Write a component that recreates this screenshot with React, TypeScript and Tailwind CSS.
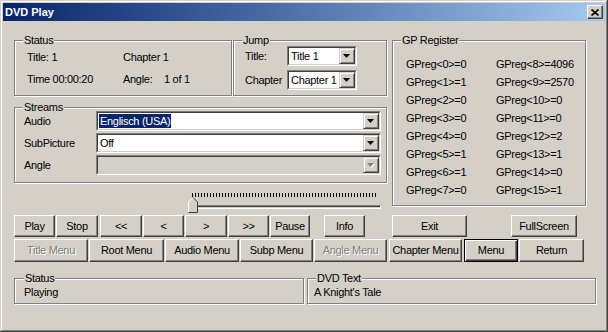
import React from "react";

const raised =
  "flex items-center justify-center border border-t-white border-l-white border-r-[#404040] border-b-[#404040] shadow-[inset_-1px_-1px_0_#808080] bg-[#d4d0c8]";
const disabledText = "text-[#808080] [text-shadow:1px_1px_0_#fff]";

type BoxProps = { label: string; className?: string; children?: React.ReactNode; labelLeft?: string };

const GroupBox = ({ label, className = "", children, labelLeft = "left-[8px]" }: BoxProps) => (
  <div className={`relative border border-[#808080] shadow-[inset_1px_1px_0_#fff,1px_1px_0_#fff] ${className}`}>
    <span className={`absolute top-[-7px] bg-[#d4d0c8] px-[1px] leading-[13px] ${labelLeft}`}>{label}</span>
    {children}
  </div>
);

const DropBtn = ({ disabled }: { disabled?: boolean }) => (
  <div className="flex w-[16px] shrink-0 items-center justify-center border border-t-[#d4d0c8] border-l-[#d4d0c8] border-r-[#404040] border-b-[#404040] bg-[#d4d0c8] shadow-[inset_1px_1px_0_#fff,inset_-1px_-1px_0_#808080]">
    <svg width="8" height="5" viewBox="0 0 8 5">
      {disabled && <polygon points="1,1 8,1 4.5,5" fill="#fff" />}
      <polygon points="0,0 7,0 3.5,4" fill={disabled ? "#808080" : "#000"} />
    </svg>
  </div>
);

type ComboProps = { text?: string; selected?: boolean; disabled?: boolean; className?: string };

const Combo = ({ text, selected, disabled, className = "" }: ComboProps) => (
  <div className={`flex h-[20px] border border-t-[#808080] border-l-[#808080] border-r-white border-b-white ${className}`}>
    <div
      className={`flex min-w-0 flex-1 border border-t-[#404040] border-l-[#404040] border-r-[#d4d0c8] border-b-[#d4d0c8] ${
        disabled ? "bg-[#d4d0c8]" : "bg-white"
      }`}
    >
      <div className="flex min-w-0 flex-1 items-center overflow-hidden pl-[1px]">
        {text && (
          <span className={selected ? "bg-[#0a246a] px-[1px] leading-[14px] text-white" : "px-[1px] leading-[14px]"}>
            {text}
          </span>
        )}
      </div>
      <DropBtn disabled={disabled} />
    </div>
  </div>
);

type BtnProps = { label: string; w: string; ml?: string; disabled?: boolean; def?: boolean };

const Btn = ({ label, w, ml = "", disabled, def }: BtnProps) =>
  def ? (
    <div
      className={`flex items-center justify-center border border-black bg-[#d4d0c8] shadow-[inset_1px_1px_0_#fff,inset_-1px_-1px_0_#404040,inset_-2px_-2px_0_#808080] ${w} ${ml}`}
    >
      {label}
    </div>
  ) : (
    <div className={`${raised} ${w} ${ml}`}>
      <span className={disabled ? disabledText : ""}>{label}</span>
    </div>
  );

const gpLeft = ["GPreg<0>=0", "GPreg<1>=1", "GPreg<2>=0", "GPreg<3>=0", "GPreg<4>=0", "GPreg<5>=1", "GPreg<6>=1", "GPreg<7>=0"];
const gpRight = ["GPreg<8>=4096", "GPreg<9>=2570", "GPreg<10>=0", "GPreg<11>=0", "GPreg<12>=2", "GPreg<13>=1", "GPreg<14>=0", "GPreg<15>=1"];

export default function App() {
  return (
    <div className="h-[332px] w-[608px] whitespace-nowrap bg-[#d4d0c8] p-[3px] font-['Liberation_Sans',Arial,sans-serif] text-[11px] tracking-[-0.3px] text-black shadow-[inset_-1px_-1px_0_#404040,inset_1px_1px_0_#d4d0c8,inset_-2px_-2px_0_#808080,inset_2px_2px_0_#fff]">
      {/* title bar */}
      <div className="flex h-[18px] items-center justify-between bg-gradient-to-r from-[#0a246a] to-[#a6caf0] pl-[2px] pr-[2px]">
        <span className="font-bold tracking-normal text-white">DVD Play</span>
        <div className="flex h-[14px] w-[16px] items-center justify-center border border-t-white border-l-white border-r-[#404040] border-b-[#404040] bg-[#d4d0c8] shadow-[inset_-1px_-1px_0_#808080]">
          <svg width="8" height="7" viewBox="0 0 8 7">
            <path d="M0.5 0.5 L7.5 6.5 M7.5 0.5 L0.5 6.5" stroke="#000" strokeWidth="1.7" />
          </svg>
        </div>
      </div>

      <div className="pl-[11px]">
        {/* upper area */}
        <div className="mt-[19px] flex h-[175px] items-start">
          <div className="flex w-[373px] flex-col">
            <div className="flex gap-[1px]">
              <GroupBox label="Status" className="h-[56px] w-[218px]">
                <div className="grid grid-cols-[96px_1fr] pl-[12px] pt-[5px] leading-[22px]">
                  <span>Title: 1</span>
                  <span>Chapter 1</span>
                  <span>Time 00:00:20</span>
                  <span className="flex">
                    <span className="w-[41px]">Angle:</span>
                    <span>1 of 1</span>
                  </span>
                </div>
              </GroupBox>
              <GroupBox label="Jump" className="h-[56px] w-[154px]">
                <div className="flex flex-col gap-[4px] pl-[11px] pt-[5px]">
                  <div className="flex items-center">
                    <span className="w-[42px]">Title:</span>
                    <Combo text="Title 1" className="w-[70px]" />
                  </div>
                  <div className="flex items-center">
                    <span className="w-[42px]">Chapter</span>
                    <Combo text="Chapter 1" className="w-[70px]" />
                  </div>
                </div>
              </GroupBox>
            </div>

            <GroupBox label="Streams" className="mt-[11px] h-[76px] w-[373px]">
              <div className="flex flex-col gap-[2px] pl-[9px] pt-[3px]">
                <div className="flex items-center">
                  <span className="w-[72px]">Audio</span>
                  <Combo text="Englisch (USA)" selected className="w-[285px]" />
                </div>
                <div className="flex items-center">
                  <span className="w-[72px]">SubPicture</span>
                  <Combo text="Off" className="w-[285px]" />
                </div>
                <div className="flex items-center">
                  <span className="w-[72px]">Angle</span>
                  <Combo disabled className="w-[285px]" />
                </div>
              </div>
            </GroupBox>

            {/* slider */}
            <div className="relative ml-[172px] mt-[7px] h-[22px] w-[195px]">
              <div className="ml-[6px] mt-[3px] h-[4px] w-[184px] bg-[repeating-linear-gradient(90deg,#000_0_1px,transparent_1px_3px)]" />
              <div className="ml-[7px] mt-[8px] h-[4px] w-[188px] border border-t-[#808080] border-l-[#808080] border-r-white border-b-white shadow-[inset_1px_1px_0_#404040]" />
              <svg className="absolute left-[2px] top-[7px]" width="11" height="16" viewBox="0 0 11 16">
                <polygon points="0.5,5 5,0.5 9.5,5 9.5,15.5 0.5,15.5" fill="#d4d0c8" />
                <polyline points="0.5,15 0.5,5 5,0.5" fill="none" stroke="#fff" />
                <polyline points="5,0.5 9.5,5 9.5,15.5 0.5,15.5" fill="none" stroke="#404040" />
              </svg>
            </div>
          </div>

          <GroupBox label="GP Register" className="ml-[5px] h-[166px] w-[194px]">
            <div className="grid grid-cols-[90px_1fr] pl-[13px] pt-[14px] leading-[18px]">
              <div className="flex flex-col">
                {gpLeft.map((g) => (
                  <span key={g}>{g}</span>
                ))}
              </div>
              <div className="flex flex-col">
                {gpRight.map((g) => (
                  <span key={g}>{g}</span>
                ))}
              </div>
            </div>
          </GroupBox>
        </div>

        {/* button row 1 */}
        <div className="flex h-[22px]">
          <Btn label="Play" w="w-[41px]" />
          <Btn label="Stop" w="w-[42px]" ml="ml-[1px]" />
          <Btn label="<<" w="w-[42px]" ml="ml-[2px]" />
          <Btn label="<" w="w-[41px]" ml="ml-[1px]" />
          <Btn label=">" w="w-[42px]" ml="ml-[1px]" />
          <Btn label=">>" w="w-[41px]" ml="ml-[1px]" />
          <Btn label="Pause" w="w-[40px]" ml="ml-[1px]" />
          <Btn label="Info" w="w-[41px]" ml="ml-[14px]" />
          <Btn label="Exit" w="w-[75px]" ml="ml-[27px]" />
          <Btn label="FullScreen" w="w-[66px]" ml="ml-[44px]" />
        </div>

        {/* button row 2 */}
        <div className="mt-[2px] flex h-[23px]">
          <Btn label="Title Menu" w="w-[74px]" disabled />
          <Btn label="Root Menu" w="w-[75px]" ml="ml-[1px]" />
          <Btn label="Audio Menu" w="w-[74px]" ml="ml-[1px]" />
          <Btn label="Subp Menu" w="w-[73px]" ml="ml-[1px]" />
          <Btn label="Angle Menu" w="w-[73px]" ml="ml-[1px]" disabled />
          <Btn label="Chapter Menu" w="w-[73px]" ml="ml-[2px]" />
          <Btn label="Menu" w="w-[54px]" ml="ml-[2px]" def />
          <Btn label="Return" w="w-[65px]" ml="ml-[1px]" />
        </div>

        {/* bottom status */}
        <div className="mt-[16px] flex gap-[3px]">
          <GroupBox label="Status" className="h-[26px] w-[290px]" labelLeft="left-[9px]">
            <div className="pl-[9px] pt-[7px] leading-[13px]">Playing</div>
          </GroupBox>
          <GroupBox label="DVD Text" className="h-[26px] w-[289px]" labelLeft="left-[8px]">
            <div className="pl-[6px] pt-[7px] leading-[13px]">A Knight's Tale</div>
          </GroupBox>
        </div>
      </div>
    </div>
  );
}
